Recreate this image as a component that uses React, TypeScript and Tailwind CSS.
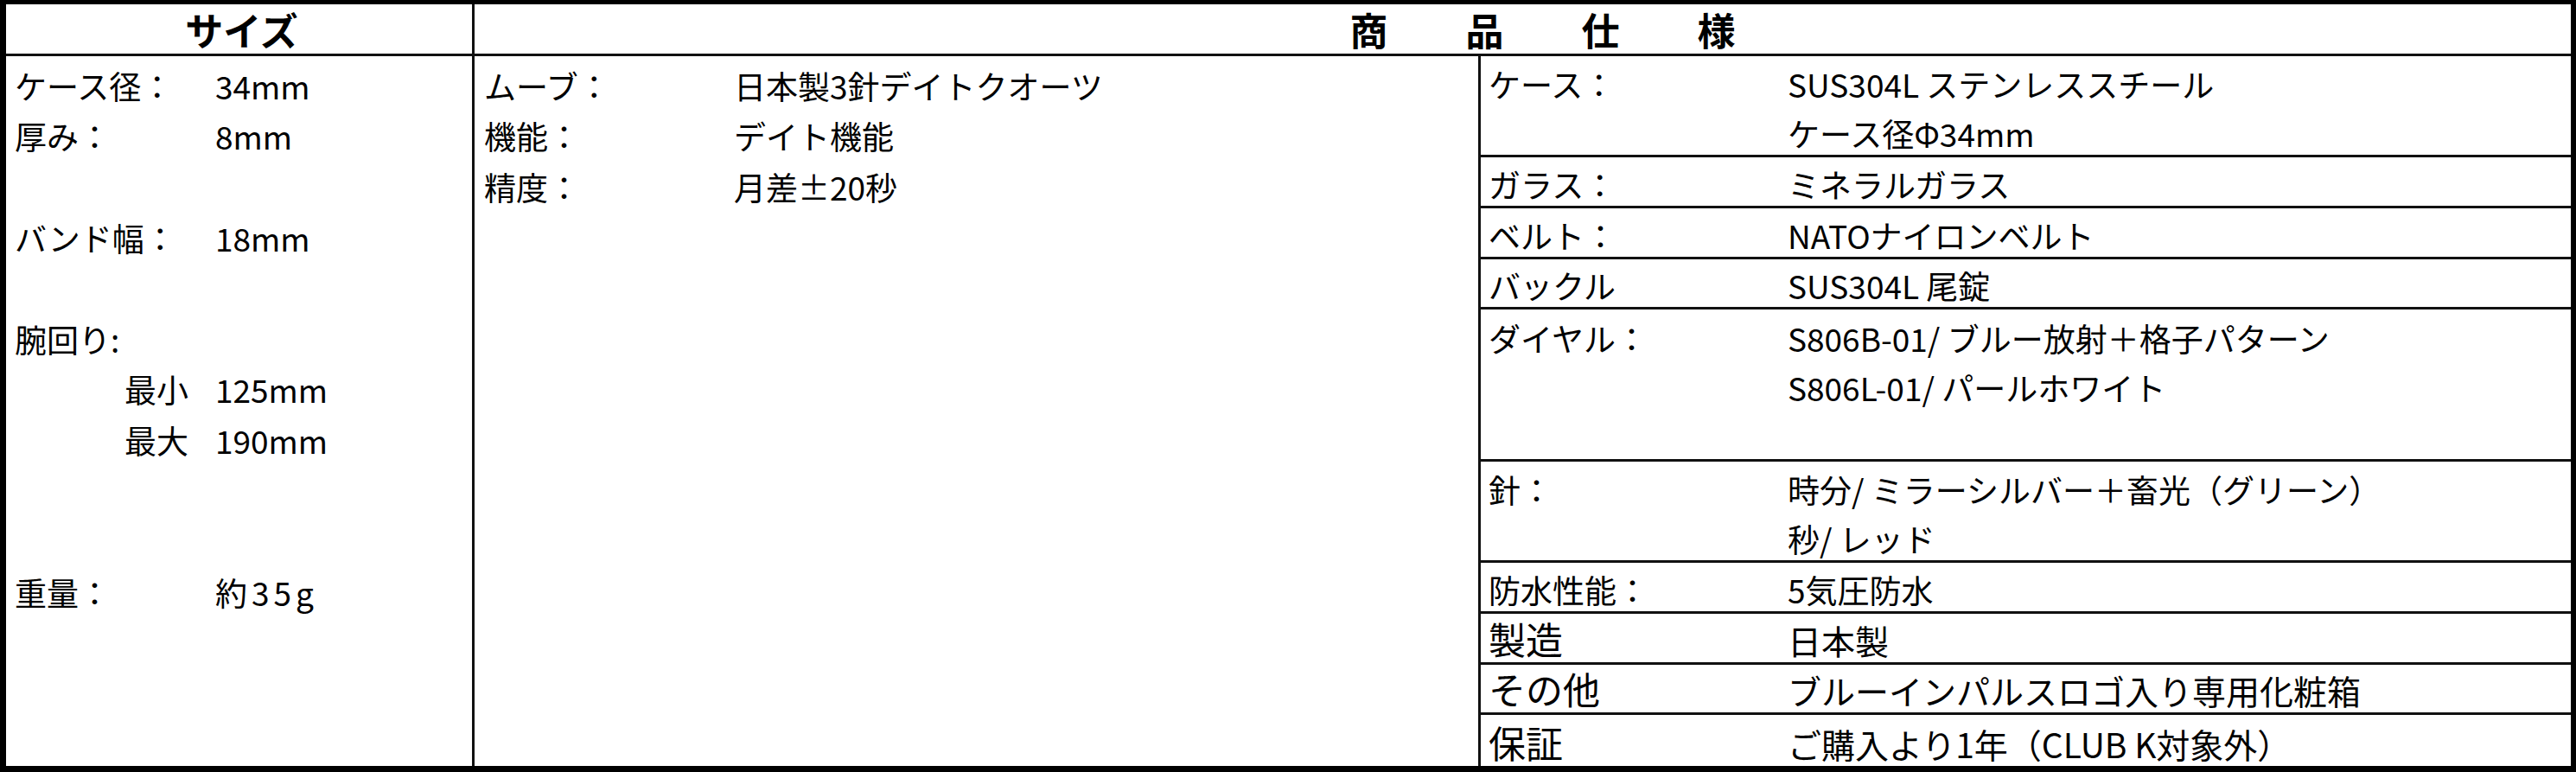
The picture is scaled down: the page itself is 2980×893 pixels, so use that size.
import React from "react";

const FONT = { fontFamily: '"Noto Sans CJK JP", "Noto Sans", sans-serif' };

type Line = { label?: string; value?: string; big?: boolean };

function Row({
  label,
  value,
  labelX,
  valueX,
  big,
  wide,
}: {
  label?: string;
  value?: string;
  labelX: string;
  valueX: string;
  big?: boolean;
  wide?: boolean;
}) {
  return (
    <div className="relative flex items-end min-h-0 pb-[6px]">
      {label !== undefined && (
        <span
          className={`${labelX} ${big ? "text-[43px] leading-[43px]" : "text-[37px] leading-[37px]"} whitespace-nowrap`}
        >
          {label}
        </span>
      )}
      {value !== undefined && (
        <span
          className={`absolute bottom-[6px] ${valueX} ${big ? "text-[39px] leading-[39px]" : "text-[37px] leading-[37px]"} ${wide ? "tracking-[5px]" : ""} whitespace-nowrap`}
        >
          {value}
        </span>
      )}
    </div>
  );
}

const col1: Line[] = [
  { label: "ケース径：", value: "34mm" },
  { label: "厚み：", value: "8mm" },
  {},
  { label: "バンド幅：", value: "18mm" },
  {},
  { label: "腕回り:" },
  { label: "", value: "125mm" },
  { label: "", value: "190mm" },
  {},
  {},
  { label: "重量：", value: "約35g" },
  {},
  {},
  {},
];

const col2: Line[] = [
  { label: "ムーブ：", value: "日本製3針デイトクオーツ" },
  { label: "機能：", value: "デイト機能" },
  { label: "精度：", value: "月差±20秒" },
];

type Cell = { span: string; lines: Line[] };

const col3: Cell[] = [
  {
    span: "row-span-2",
    lines: [
      { label: "ケース：", value: "SUS304L ステンレススチール" },
      { value: "ケース径Φ34mm" },
    ],
  },
  { span: "row-span-1", lines: [{ label: "ガラス：", value: "ミネラルガラス" }] },
  { span: "row-span-1", lines: [{ label: "ベルト：", value: "NATOナイロンベルト" }] },
  { span: "row-span-1", lines: [{ label: "バックル", value: "SUS304L 尾錠" }] },
  {
    span: "row-span-3",
    lines: [
      { label: "ダイヤル：", value: "S806B-01/ ブルー放射＋格子パターン" },
      { value: "S806L-01/ パールホワイト" },
      {},
    ],
  },
  {
    span: "row-span-2",
    lines: [
      { label: "針：", value: "時分/ ミラーシルバー＋畜光（グリーン）" },
      { value: "秒/ レッド" },
    ],
  },
  { span: "row-span-1", lines: [{ label: "防水性能：", value: "5気圧防水", big: false }] },
  { span: "row-span-1", lines: [{ label: "製造", value: "日本製", big: true }] },
  { span: "row-span-1", lines: [{ label: "その他", value: "ブルーインパルスロゴ入り専用化粧箱", big: true }] },
  { span: "row-span-1", lines: [{ label: "保証", value: "ご購入より1年（CLUB K対象外）", big: true }] },
];

function gridRows(n: number) {
  if (n === 2) return "grid grid-rows-2";
  if (n === 3) return "grid grid-rows-3";
  return "grid grid-rows-1";
}

export default function App() {
  return (
    <div className="bg-white text-black w-[2980px] h-[893px]" style={FONT}>
      <div className="box-border w-[2980px] h-[893px] border-t-[5px] border-l-[7px] border-r-[6px] border-b-[7px] border-black flex flex-col">
        {/* Header */}
        <div className="flex h-[60px] border-b-[3px] border-[#111]">
          <div className="w-[542px] border-r-[3px] border-[#111] flex items-center justify-center">
            <span className="font-bold text-[44px] leading-[44px] pl-[6px]">サイズ</span>
          </div>
          <div className="flex-1 flex items-center justify-center">
            <div className="flex gap-[90px] font-bold text-[44px] leading-[44px] pl-[46px]">
              <span>商</span>
              <span>品</span>
              <span>仕</span>
              <span>様</span>
            </div>
          </div>
        </div>
        {/* Body */}
        <div className="flex-1 grid grid-cols-[542px_1164px_1fr] min-h-0">
          {/* Col 1 */}
          <div className="border-r-[3px] border-[#111] grid grid-rows-[repeat(14,minmax(0,1fr))]">
            {col1.map((l, i) => {
              if (i === 6 || i === 7) {
                return (
                  <div key={i} className="relative flex items-end pb-[6px]">
                    <span className="ml-[137px] text-[37px] leading-[37px]">{i === 6 ? "最小" : "最大"}</span>
                    <span className="absolute bottom-[6px] left-[242px] text-[37px] leading-[37px]">{l.value}</span>
                  </div>
                );
              }
              return (
                <Row
                  key={i}
                  label={l.label}
                  value={l.value}
                  labelX="ml-[10px]"
                  valueX="left-[242px]"
                  wide={i === 10}
                />
              );
            })}
          </div>
          {/* Col 2 */}
          <div className="border-r-[3px] border-[#111] grid grid-rows-[repeat(14,minmax(0,1fr))]">
            {Array.from({ length: 14 }).map((_, i) => {
              const l = col2[i];
              if (!l) return <div key={i} />;
              return (
                <Row
                  key={i}
                  label={l.label}
                  value={l.value}
                  labelX="ml-[11px]"
                  valueX="left-[300px]"
                />
              );
            })}
          </div>
          {/* Col 3 */}
          <div className="grid grid-rows-[repeat(14,minmax(0,1fr))]">
            {col3.map((c, i) => (
              <div
                key={i}
                className={`${c.span} ${gridRows(c.lines.length)} ${i < col3.length - 1 ? "border-b-[3px] border-[#111]" : ""} min-h-0`}
              >
                {c.lines.map((l, j) => (
                  <Row
                    key={j}
                    label={l.label}
                    value={l.value}
                    big={l.big}
                    labelX="ml-[9px]"
                    valueX="left-[355px]"
                  />
                ))}
              </div>
            ))}
          </div>
        </div>
      </div>
    </div>
  );
}
